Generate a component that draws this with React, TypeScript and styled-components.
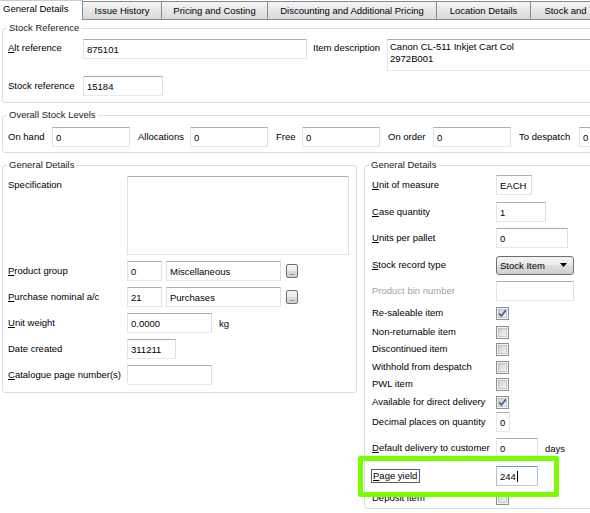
import React from 'react';
import styled, { createGlobalStyle } from 'styled-components';

const GlobalStyle = createGlobalStyle`
  html, body { margin: 0; padding: 0; background: #fff; }
  body {
    font-family: "Liberation Sans", Arial, sans-serif;
    font-size: 9.5px;
    color: #000;
  }
  *, *::before, *::after { box-sizing: border-box; }
`;

const Window = styled.div`
  position: relative;
  width: 590px;
  height: 513px;
  overflow: hidden;
  background: #fff;
`;

const TabStrip = styled.div`
  display: flex;
  align-items: flex-end;
  height: 20px;
  border-bottom: 1px solid #898c95;
`;

const ActiveTab = styled.div<{ $w: number }>`
  flex: none;
  width: ${p => p.$w}px;
  height: 20px;
  margin-bottom: -1px;
  padding-left: 3px;
  border-top: 1px solid #c9ccd3;
  border-right: 1px solid #898c95;
  background: #fff;
  line-height: 16px;
  white-space: nowrap;
`;

const Tab = styled.div<{ $w: number }>`
  flex: none;
  width: ${p => p.$w}px;
  height: 18px;
  line-height: 17px;
  border-top: 1px solid #898c95;
  border-right: 1px solid #898c95;
  background: linear-gradient(#f5f5f5, #e9e9e9 45%, #d9d9d9);
  text-align: center;
  white-space: nowrap;
  overflow: hidden;
`;

const Panel = styled.div`
  padding: 2px 0 0 2px;
`;

const Group = styled.fieldset<{ $w: number; $mt?: number }>`
  flex: none;
  margin: ${p => p.$mt ?? 0}px 0 0 0;
  padding: 0;
  width: ${p => p.$w}px;
  min-width: 0;
  border: 1px solid #d5dfe5;
  border-radius: 3px;
`;

const Legend = styled.legend`
  margin-left: 4px;
  padding: 0 2px;
  line-height: 12px;
  color: #222;
`;

const Body = styled.div<{ $pt: number; $pb: number; $pl: number }>`
  padding: ${p => p.$pt}px 0 ${p => p.$pb}px ${p => p.$pl}px;
`;

const Line = styled.div<{ $h?: number; $mt?: number; $top?: boolean }>`
  display: flex;
  align-items: ${p => (p.$top ? 'flex-start' : 'center')};
  height: ${p => (p.$h ? `${p.$h}px` : 'auto')};
  margin-top: ${p => p.$mt ?? 0}px;
`;

const Columns = styled.div`
  display: flex;
  align-items: flex-start;
  gap: 7px;
  margin-top: 6px;
`;

const FormGrid = styled.div`
  display: grid;
  grid-template-columns: 119px auto;
  row-gap: 6px;
  align-items: center;
`;

const Cell = styled.div`
  display: flex;
  align-items: center;
  height: 20px;
`;

const Label = styled.div<{ $w?: number; $ml?: number; $lh?: number; $disabled?: boolean; $top?: number }>`
  flex: none;
  width: ${p => (p.$w ? `${p.$w}px` : 'auto')};
  margin-left: ${p => p.$ml ?? 0}px;
  padding-top: ${p => p.$top ?? 0}px;
  line-height: ${p => p.$lh ?? 12}px;
  align-self: ${p => (p.$top !== undefined ? 'start' : 'auto')};
  white-space: nowrap;
  color: ${p => (p.$disabled ? '#a2a2a2' : '#000')};
`;

const Key = styled.span`
  text-decoration: underline;
  text-underline-offset: 1px;
`;

const TextBox = styled.div<{ $w: number; $ml?: number; $focus?: boolean }>`
  flex: none;
  display: flex;
  align-items: center;
  width: ${p => p.$w}px;
  height: 20px;
  margin-left: ${p => p.$ml ?? 0}px;
  padding: 0 2px 0 3px;
  background: #fff;
  border: 1px solid;
  border-color: ${p =>
    p.$focus ? '#6f9bcc #a9c5e4 #b7d0ea #a9c5e4' : '#abadb3 #dbdfe6 #e3e9ef #e2e3ea'};
  white-space: nowrap;
  overflow: hidden;
`;

const MultiBox = styled.div<{ $w: number; $h: number }>`
  flex: none;
  width: ${p => p.$w}px;
  height: ${p => p.$h}px;
  padding: 1px 2px 0 2px;
  line-height: 12px;
  background: #fff;
  border: 1px solid;
  border-color: #abadb3 #dbdfe6 #e3e9ef #e2e3ea;
  white-space: pre;
`;

const Unit = styled.span`
  margin-left: 7px;
`;

const DotsButton = styled.div`
  flex: none;
  width: 12px;
  height: 14px;
  margin-left: 5px;
  display: flex;
  align-items: flex-end;
  justify-content: center;
  padding-bottom: 1px;
  border: 1px solid #707070;
  border-radius: 2px;
  background: linear-gradient(#f4f4f4, #ebebeb 50%, #dcdcdc 50%, #cfcfcf);
  font-size: 7px;
  line-height: 6px;
  letter-spacing: -0.5px;
  color: #222;
`;

const Select = styled.div`
  flex: none;
  width: 78px;
  height: 19px;
  display: flex;
  align-items: center;
  justify-content: space-between;
  padding: 0 6px 0 3px;
  border: 1px solid #707070;
  border-radius: 3px;
  background: linear-gradient(#f3f3f3, #ebebeb 50%, #dddddd 50%, #cfcfcf);
`;

const FocusLabel = styled.span`
  display: inline-block;
  margin-left: -1px;
  padding: 0 2px 0 1px;
  line-height: 12px;
  border: 1px solid #5e5e5e;
`;

const Caret = styled.span`
  display: inline-block;
  width: 1px;
  height: 11px;
  margin-left: 1px;
  background: #000;
`;

const CheckWrap = styled.span`
  display: flex;
  flex: none;
`;

const Highlight = styled.div`
  position: absolute;
  left: 358px;
  top: 456px;
  width: 201px;
  height: 41px;
  border: 5px solid #7cfc00;
  border-radius: 2px;
  pointer-events: none;
`;

const CheckBox: React.FC<{ checked?: boolean }> = ({ checked }) => (
  <CheckWrap>
    <svg width="13" height="13" viewBox="0 0 13 13">
      <defs>
        <linearGradient id="cbFill" x1="0" y1="0" x2="1" y2="1">
          <stop offset="0" stopColor="#c9cdd3" />
          <stop offset="1" stopColor="#f7f7f7" />
        </linearGradient>
      </defs>
      <rect x="0.5" y="0.5" width="12" height="12" fill="#f3f3f3" stroke="#8e8f8f" />
      <rect x="2.5" y="2.5" width="8" height="8" fill="url(#cbFill)" stroke="#b3b6bc" strokeWidth="0.7" />
      {checked && (
        <path d="M3.2 6.4 L5.4 9 L9.8 3.4" fill="none" stroke="#4a5e9c" strokeWidth="1.7" />
      )}
    </svg>
  </CheckWrap>
);

const Arrow = () => (
  <svg width="7" height="4" viewBox="0 0 7 4">
    <polygon points="0,0 7,0 3.5,4" fill="#000" />
  </svg>
);

type RightRow = {
  h: number;
  label: React.ReactNode;
  disabled?: boolean;
  control: React.ReactNode;
};

const rightRows: RightRow[] = [
  { h: 26, label: <><Key>U</Key>nit of measure</>, control: <TextBox $w={36}>EACH</TextBox> },
  { h: 28, label: <><Key>C</Key>ase quantity</>, control: <TextBox $w={50}>1</TextBox> },
  { h: 24, label: <><Key>U</Key>nits per pallet</>, control: <TextBox $w={72}>0</TextBox> },
  {
    h: 30,
    label: <><Key>S</Key>tock record type</>,
    control: (
      <Select>
        <span>Stock Item</span>
        <Arrow />
      </Select>
    ),
  },
  { h: 22, label: 'Product bin number', disabled: true, control: <TextBox $w={78}></TextBox> },
  { h: 22, label: 'Re-saleable item', control: <CheckBox checked /> },
  { h: 16, label: 'Non-returnable item', control: <CheckBox /> },
  { h: 18, label: 'Discontinued item', control: <CheckBox /> },
  { h: 18, label: 'Withhold from despatch', control: <CheckBox /> },
  { h: 16, label: 'PWL item', control: <CheckBox /> },
  { h: 20, label: 'Available for direct delivery', control: <CheckBox checked /> },
  { h: 20, label: 'Decimal places on quantity', control: <TextBox $w={14}>0</TextBox> },
  {
    h: 32,
    label: <><Key>D</Key>efault delivery to customer</>,
    control: (
      <>
        <TextBox $w={42}>0</TextBox>
        <Unit>days</Unit>
      </>
    ),
  },
  {
    h: 24,
    label: <FocusLabel><Key>P</Key>age yield</FocusLabel>,
    control: (
      <TextBox $w={42} $focus>
        244<Caret />
      </TextBox>
    ),
  },
  { h: 20, label: 'Deposit item', control: <CheckBox /> },
];

const tabs: { label: string; w: number }[] = [
  { label: 'Issue History', w: 79 },
  { label: 'Pricing and Costing', w: 106 },
  { label: 'Discounting and Additional Pricing', w: 169 },
  { label: 'Location Details', w: 94 },
  { label: 'Stock and', w: 70 },
];

export default function App() {
  return (
    <Window>
      <GlobalStyle />
      <TabStrip>
        <ActiveTab $w={83}>General Details</ActiveTab>
        {tabs.map(t => (
          <Tab key={t.label} $w={t.w}>
            {t.label}
          </Tab>
        ))}
      </TabStrip>

      <Panel>
        <Group $w={640}>
          <Legend>Stock Reference</Legend>
          <Body $pt={5} $pb={6} $pl={5}>
            <Line $top>
              <Label $w={75} $lh={18}>
                <Key>A</Key>lt reference
              </Label>
              <TextBox $w={224}>875101</TextBox>
              <Label $w={74} $ml={6} $lh={18}>
                Item description
              </Label>
              <MultiBox $w={260} $h={32}>{'Canon CL-511 Inkjet Cart Col\n2972B001'}</MultiBox>
            </Line>
            <Line $mt={5}>
              <Label $w={75}>Stock reference</Label>
              <TextBox $w={80}>15184</TextBox>
            </Line>
          </Body>
        </Group>

        <Group $w={640} $mt={6}>
          <Legend>Overall Stock Levels</Legend>
          <Body $pt={6} $pb={5} $pl={5}>
            <Line>
              <Label $w={44}>On hand</Label>
              <TextBox $w={78}>0</TextBox>
              <Label $w={52} $ml={8}>Allocations</Label>
              <TextBox $w={78}>0</TextBox>
              <Label $w={26} $ml={8}>Free</Label>
              <TextBox $w={78}>0</TextBox>
              <Label $w={45} $ml={8}>On order</Label>
              <TextBox $w={78}>0</TextBox>
              <Label $w={60} $ml={8}>To despatch</Label>
              <TextBox $w={78}>0</TextBox>
            </Line>
          </Body>
        </Group>

        <Columns>
          <Group $w={355}>
            <Legend>General Details</Legend>
            <Body $pt={5} $pb={7} $pl={5}>
              <FormGrid>
                <Label $top={3}>Specification</Label>
                <MultiBox $w={222} $h={79} />

                <Label>
                  <Key>P</Key>roduct group
                </Label>
                <Cell>
                  <TextBox $w={35}>0</TextBox>
                  <TextBox $w={115} $ml={4}>Miscellaneous</TextBox>
                  <DotsButton>...</DotsButton>
                </Cell>

                <Label>
                  <Key>P</Key>urchase nominal a/c
                </Label>
                <Cell>
                  <TextBox $w={35}>21</TextBox>
                  <TextBox $w={115} $ml={4}>Purchases</TextBox>
                  <DotsButton>...</DotsButton>
                </Cell>

                <Label>
                  <Key>U</Key>nit weight
                </Label>
                <Cell>
                  <TextBox $w={85}>0.0000</TextBox>
                  <Unit>kg</Unit>
                </Cell>

                <Label>Date created</Label>
                <Cell>
                  <TextBox $w={49}>311211</TextBox>
                </Cell>

                <Label>
                  <Key>C</Key>atalogue page number(s)
                </Label>
                <Cell>
                  <TextBox $w={85} />
                </Cell>
              </FormGrid>
            </Body>
          </Group>

          <Group $w={260}>
            <Legend>General Details</Legend>
            <Body $pt={1} $pb={0} $pl={7}>
              {rightRows.map((r, i) => (
                <Line key={i} $h={r.h}>
                  <Label $w={124} $disabled={r.disabled}>
                    {r.label}
                  </Label>
                  {r.control}
                </Line>
              ))}
            </Body>
          </Group>
        </Columns>
      </Panel>

      <Highlight />
    </Window>
  );
}
